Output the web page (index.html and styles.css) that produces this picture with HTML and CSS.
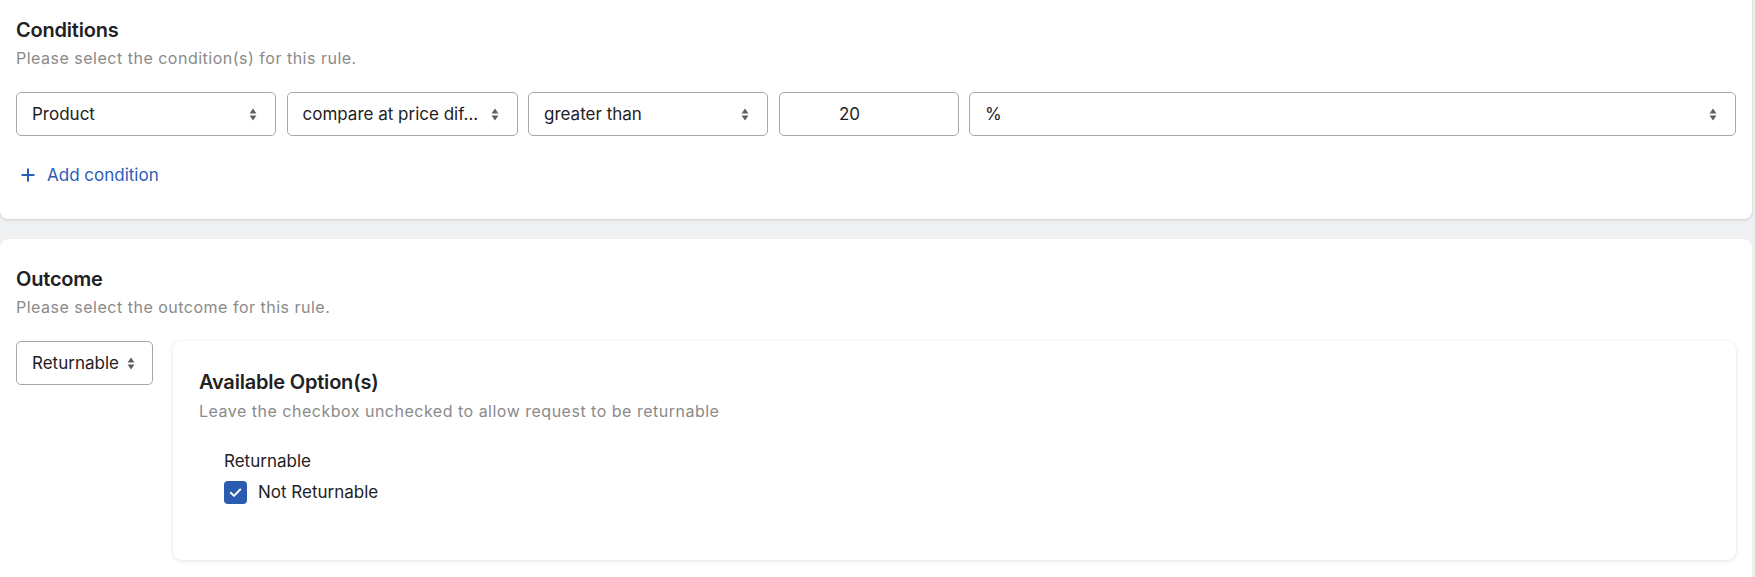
FILE: index.html
```html
<!DOCTYPE html>
<html lang="en">
<head>
<meta charset="utf-8">
<title>Rule</title>
<link rel="stylesheet" href="styles.css">
</head>
<body>
<section class="card card-conditions">
  <h2 class="card-title">Conditions</h2>
  <p class="card-sub">Please select the condition(s) for this rule.</p>
  <div class="cond-row">
    <div class="select w-product"><span class="select-text">Product</span><svg class="updown" viewBox="0 0 8 13" width="8" height="13"><path d="M0.6 5.4 L4 0.6 L7.4 5.4 Z M0.6 7.6 L7.4 7.6 L4 12.4 Z"/></svg></div>
    <div class="select w-field"><span class="select-text">compare at price dif...</span><svg class="updown" viewBox="0 0 8 13" width="8" height="13"><path d="M0.6 5.4 L4 0.6 L7.4 5.4 Z M0.6 7.6 L7.4 7.6 L4 12.4 Z"/></svg></div>
    <div class="select w-op"><span class="select-text">greater than</span><svg class="updown" viewBox="0 0 8 13" width="8" height="13"><path d="M0.6 5.4 L4 0.6 L7.4 5.4 Z M0.6 7.6 L7.4 7.6 L4 12.4 Z"/></svg></div>
    <div class="textbox w-value"><span>20</span></div>
    <div class="select w-unit"><span class="select-text">%</span><svg class="updown" viewBox="0 0 8 13" width="8" height="13"><path d="M0.6 5.4 L4 0.6 L7.4 5.4 Z M0.6 7.6 L7.4 7.6 L4 12.4 Z"/></svg></div>
  </div>
  <a class="add-link" href="#"><svg class="plus" viewBox="0 0 14 14" width="14" height="14"><path d="M7 0.5 V13.5 M0.5 7 H13.5"/></svg><span>Add condition</span></a>
</section>

<section class="card card-outcome">
  <h2 class="card-title">Outcome</h2>
  <p class="card-sub">Please select the outcome for this rule.</p>
  <div class="outcome-row">
    <div class="select select-compact"><span class="select-text">Returnable</span><svg class="updown" viewBox="0 0 8 13" width="8" height="13"><path d="M0.6 5.4 L4 0.6 L7.4 5.4 Z M0.6 7.6 L7.4 7.6 L4 12.4 Z"/></svg></div>
    <div class="options-card">
      <h3 class="card-title">Available Option(s)</h3>
      <p class="card-sub">Leave the checkbox unchecked to allow request to be returnable</p>
      <div class="option-group">
        <div class="group-label">Returnable</div>
        <label class="check-row">
          <span class="checkbox"><svg viewBox="0 0 23 23" width="23" height="23"><path d="M6.8 11.8 L10 14.9 L16.2 8.5"/></svg></span>
          <span>Not Returnable</span>
        </label>
      </div>
    </div>
  </div>
</section>
</body>
</html>
```

FILE: styles.css
```css
* { box-sizing: border-box; }

html, body {
  margin: 0;
  padding: 0;
}

body {
  background: #eef0f1;
  font-family: Inter, "Noto Sans", "Liberation Sans", sans-serif;
  color: #1f2124;
  width: 1755px;
  height: 577px;
  overflow: hidden;
}

.card {
  background: #ffffff;
  margin-right: 3px;
  padding: 0 16px;
}

.card-conditions {
  padding-top: 18px;
  height: 219px;
  border-radius: 0 0 8px 8px;
  box-shadow: 0 1px 3px rgba(0, 0, 0, 0.14), 0 0 1px rgba(0, 0, 0, 0.1);
}

.card-outcome {
  margin-top: 20px;
  padding-top: 28px;
  padding-bottom: 40px;
  border-radius: 8px 8px 0 0;
  box-shadow: 0 0 1px rgba(0, 0, 0, 0.1);
}

.card-title {
  margin: 0;
  font-size: 20px;
  line-height: 24px;
  font-weight: 600;
  letter-spacing: -0.2px;
  color: #1f2124;
}

.card-sub {
  margin: 6px 0 0;
  font-size: 16px;
  line-height: 20px;
  letter-spacing: 0.5px;
  color: #8a8a8a;
}

.cond-row {
  display: flex;
  gap: 10.5px;
  margin-top: 24px;
}

.select, .textbox {
  height: 44px;
  border: 1px solid #a3a7ae;
  border-radius: 5px;
  background: #fff;
  display: flex;
  align-items: center;
  font-size: 17px;
  line-height: 24px;
  color: #1f2124;
}

.select {
  justify-content: space-between;
  padding: 0 18px 0 15px;
}

.select-text {
  white-space: nowrap;
}

.updown {
  flex: none;
  fill: #5c5f62;
}

.w-product { width: 260px; }
.w-field { width: 231px; }
.w-op { width: 240px; }
.w-value { width: 180px; }
.w-unit { flex: 1; }

.textbox {
  justify-content: center;
  padding-right: 38px;
}

.add-link {
  display: inline-flex;
  align-items: center;
  gap: 12px;
  margin-top: 27px;
  margin-left: 5px;
  font-size: 17px;
  line-height: 24px;
  color: #2c5cb9;
  text-decoration: none;
}

.plus {
  stroke: #2c5cb9;
  stroke-width: 2;
  fill: none;
}

.outcome-row {
  display: flex;
  align-items: flex-start;
  gap: 20px;
  margin-top: 24px;
}

.select-compact {
  width: 137px;
  flex: none;
  padding-right: 17px;
}

.options-card {
  flex: 1;
  background: #ffffff;
  border-radius: 8px;
  box-shadow: 0 1px 4px rgba(0, 0, 0, 0.10), 0 0 1px rgba(0, 0, 0, 0.08);
  padding: 29px 26px 56px;
}

.options-card .card-sub {
  margin-top: 7px;
}

.option-group {
  padding-left: 25px;
  margin-top: 28px;
}

.group-label {
  font-size: 17px;
  line-height: 24px;
  color: #1f2124;
}

.check-row {
  display: flex;
  align-items: center;
  gap: 11px;
  margin-top: 7px;
  font-size: 17px;
  line-height: 24px;
  color: #1f2124;
}

.checkbox {
  width: 23px;
  height: 23px;
  border-radius: 4px;
  background: #2a5db0;
  display: flex;
}

.checkbox svg {
  fill: none;
  stroke: #ffffff;
  stroke-width: 2;
  stroke-linecap: round;
  stroke-linejoin: round;
}
```
